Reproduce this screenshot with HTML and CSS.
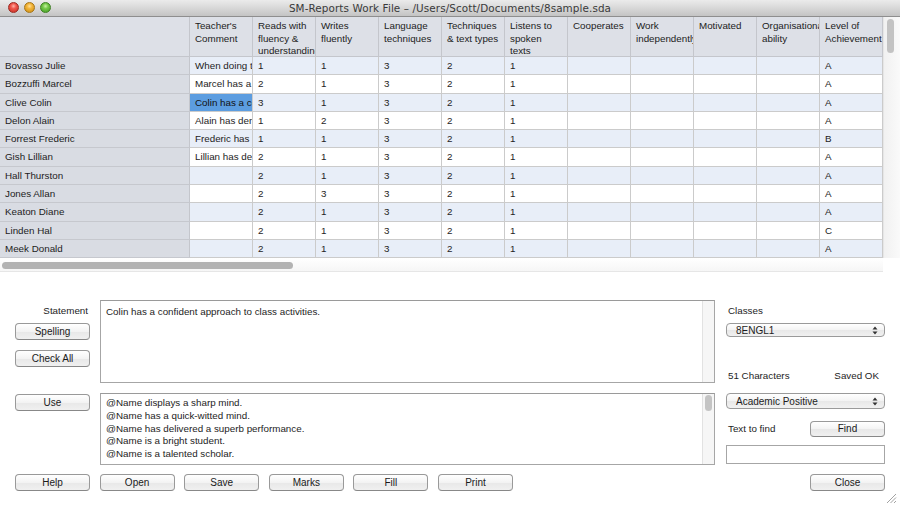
FILE: index.html
```html
<!DOCTYPE html>
<html>
<head>
<meta charset="utf-8">
<title>SM-Reports Work File</title>
<link rel="stylesheet" href="styles.css">
</head>
<body>
<div class="window">
  <div class="titlebar">
    <div class="lights">
      <span class="light red"></span>
      <span class="light yellow"></span>
      <span class="light green"></span>
    </div>
    <div class="title">SM-Reports Work File – /Users/Scott/Documents/8sample.sda</div>
  </div>

  <div class="grid-wrap">
    <div class="table">
      <div class="hd name"></div>
      <div class="hd">Teacher's<br>Comment</div>
      <div class="hd">Reads with<br>fluency &amp;<br>understanding</div>
      <div class="hd">Writes<br>fluently</div>
      <div class="hd">Language<br>techniques</div>
      <div class="hd">Techniques<br>&amp; text types</div>
      <div class="hd">Listens to<br>spoken<br>texts</div>
      <div class="hd">Cooperates</div>
      <div class="hd">Work<br>independently</div>
      <div class="hd">Motivated</div>
      <div class="hd">Organisational<br>ability</div>
      <div class="hd">Level of<br>Achievement</div>

      <div class="c name">Bovasso Julie</div><div class="c alt">When doing this task, Julie</div><div class="c alt">1</div><div class="c alt">1</div><div class="c alt">3</div><div class="c alt">2</div><div class="c alt">1</div><div class="c alt"></div><div class="c alt"></div><div class="c alt"></div><div class="c alt"></div><div class="c alt">A</div>
      <div class="c name">Bozzuffi Marcel</div><div class="c">Marcel has a positive</div><div class="c">2</div><div class="c">1</div><div class="c">3</div><div class="c">2</div><div class="c">1</div><div class="c"></div><div class="c"></div><div class="c"></div><div class="c"></div><div class="c">A</div>
      <div class="c name">Clive Colin</div><div class="c sel">Colin has a confident</div><div class="c alt">3</div><div class="c alt">1</div><div class="c alt">3</div><div class="c alt">2</div><div class="c alt">1</div><div class="c alt"></div><div class="c alt"></div><div class="c alt"></div><div class="c alt"></div><div class="c alt">A</div>
      <div class="c name">Delon Alain</div><div class="c">Alain has demonstrated</div><div class="c">1</div><div class="c">2</div><div class="c">3</div><div class="c">2</div><div class="c">1</div><div class="c"></div><div class="c"></div><div class="c"></div><div class="c"></div><div class="c">A</div>
      <div class="c name">Forrest Frederic</div><div class="c alt">Frederic has consistently</div><div class="c alt">1</div><div class="c alt">1</div><div class="c alt">3</div><div class="c alt">2</div><div class="c alt">1</div><div class="c alt"></div><div class="c alt"></div><div class="c alt"></div><div class="c alt"></div><div class="c alt">B</div>
      <div class="c name">Gish Lillian</div><div class="c">Lillian has demonstrated</div><div class="c">2</div><div class="c">1</div><div class="c">3</div><div class="c">2</div><div class="c">1</div><div class="c"></div><div class="c"></div><div class="c"></div><div class="c"></div><div class="c">A</div>
      <div class="c name">Hall Thurston</div><div class="c alt"></div><div class="c alt">2</div><div class="c alt">1</div><div class="c alt">3</div><div class="c alt">2</div><div class="c alt">1</div><div class="c alt"></div><div class="c alt"></div><div class="c alt"></div><div class="c alt"></div><div class="c alt">A</div>
      <div class="c name">Jones Allan</div><div class="c"></div><div class="c">2</div><div class="c">3</div><div class="c">3</div><div class="c">2</div><div class="c">1</div><div class="c"></div><div class="c"></div><div class="c"></div><div class="c"></div><div class="c">A</div>
      <div class="c name">Keaton Diane</div><div class="c alt"></div><div class="c alt">2</div><div class="c alt">1</div><div class="c alt">3</div><div class="c alt">2</div><div class="c alt">1</div><div class="c alt"></div><div class="c alt"></div><div class="c alt"></div><div class="c alt"></div><div class="c alt">A</div>
      <div class="c name">Linden Hal</div><div class="c"></div><div class="c">2</div><div class="c">1</div><div class="c">3</div><div class="c">2</div><div class="c">1</div><div class="c"></div><div class="c"></div><div class="c"></div><div class="c"></div><div class="c">C</div>
      <div class="c name">Meek Donald</div><div class="c alt"></div><div class="c alt">2</div><div class="c alt">1</div><div class="c alt">3</div><div class="c alt">2</div><div class="c alt">1</div><div class="c alt"></div><div class="c alt"></div><div class="c alt"></div><div class="c alt"></div><div class="c alt">A</div>
    </div>
    <div class="vscroll"><div class="vthumb"></div></div>
  </div>

  <div class="hscroll"><div class="hthumb"></div></div>

  <div class="lower">
    <div class="row row-a">
      <div class="side">
        <div class="label stmt-label">Statement</div>
        <div class="btn spell">Spelling</div>
        <div class="btn check">Check All</div>
      </div>
      <div class="box stmt">
        <div class="box-text">Colin has a confident approach to class activities.</div>
        <div class="track"></div>
      </div>
      <div class="right">
        <div class="label">Classes</div>
        <div class="popup classes-pop"><span>8ENGL1</span><svg class="arrows" width="6" height="9" viewBox="0 0 6 9"><path d="M3 0.5 L5.5 3.5 L0.5 3.5 Z M3 8.5 L5.5 5.5 L0.5 5.5 Z" fill="#333"/></svg></div>
        <div class="chars"><span>51 Characters</span><span>Saved OK</span></div>
      </div>
    </div>

    <div class="row row-b">
      <div class="side">
        <div class="btn use">Use</div>
      </div>
      <div class="box list">
        <div class="box-text lines">
          <div>@Name displays a sharp mind.</div>
          <div>@Name has a quick-witted mind.</div>
          <div>@Name has delivered a superb performance.</div>
          <div>@Name is a bright student.</div>
          <div>@Name is a talented scholar.</div>
        </div>
        <div class="track"><div class="lthumb"></div></div>
      </div>
      <div class="right">
        <div class="popup"><span>Academic Positive</span><svg class="arrows" width="6" height="9" viewBox="0 0 6 9"><path d="M3 0.5 L5.5 3.5 L0.5 3.5 Z M3 8.5 L5.5 5.5 L0.5 5.5 Z" fill="#333"/></svg></div>
        <div class="find-row"><span class="label">Text to find</span><div class="btn find">Find</div></div>
        <div class="field"></div>
      </div>
    </div>

    <div class="row row-c">
      <div class="btn">Help</div>
      <div class="btn">Open</div>
      <div class="btn">Save</div>
      <div class="btn">Marks</div>
      <div class="btn">Fill</div>
      <div class="btn">Print</div>
      <div class="spacer"></div>
      <div class="btn">Close</div>
    </div>
  </div>

  <svg class="grip" width="11" height="11" viewBox="0 0 11 11">
    <path d="M1 10 L10 1 M4.5 10 L10 4.5 M8 10 L10 8" stroke="#8a8a8a" stroke-width="0.8"/>
  </svg>
</div>
</body>
</html>
```
FILE: styles.css
```css
* { box-sizing: border-box; }
html, body { margin: 0; padding: 0; }
body {
  width: 900px;
  height: 506px;
  overflow: hidden;
  background: #ffffff;
  font-family: "Liberation Sans", Arial, sans-serif;
  font-size: 9.8px;
  color: #1d1d1d;
}
.window {
  width: 900px;
  height: 506px;
  display: flex;
  flex-direction: column;
  background: #ffffff;
  position: relative;
}

/* title bar */
.titlebar {
  height: 17px;
  flex: none;
  display: flex;
  align-items: center;
  background: linear-gradient(#ebebeb, #d6d6d6 55%, #c4c4c4);
  border-bottom: 1px solid #8e8e8e;
  position: relative;
}
.lights {
  display: flex;
  gap: 5px;
  padding-left: 8px;
  position: absolute;
  left: 0;
  top: 2px;
}
.light {
  width: 11px;
  height: 11px;
  border-radius: 50%;
  display: block;
}
.red { background: radial-gradient(circle at 50% 35%, #ffb3a8 0, #f0574c 35%, #c22a20 100%); border: 0.5px solid #9c2a22; }
.yellow { background: radial-gradient(circle at 50% 35%, #ffe29a 0, #f3b53a 35%, #c98a12 100%); border: 0.5px solid #a57415; }
.green { background: radial-gradient(circle at 50% 35%, #c9f2a4 0, #76c94a 35%, #3f9a22 100%); border: 0.5px solid #3e7f22; }
.title {
  flex: 1;
  text-align: center;
  font-family: "DejaVu Sans", sans-serif;
  font-size: 10.4px;
  color: #3a3a3a;
  letter-spacing: 0.1px;
}

/* table */
.grid-wrap {
  height: 241px;
  flex: none;
  display: flex;
}
.table {
  width: 883px;
  display: grid;
  grid-template-columns: 190px repeat(11, 63px);
  grid-template-rows: 40px repeat(11, 18.3px);
  overflow: hidden;
}
.hd {
  background: #dde0e7;
  border-right: 1px solid #c4c6cc;
  border-bottom: 1px solid #c4c6cc;
  padding: 3px 5px 0 5px;
  line-height: 12.5px;
  white-space: nowrap;
  overflow: hidden;
  color: #222;
}
.c {
  border-right: 1px solid #cbcbcb;
  border-bottom: 1px solid #cbcbcb;
  padding: 0 5px;
  line-height: 17.3px;
  white-space: nowrap;
  overflow: hidden;
  text-overflow: clip;
  background: #ffffff;
}
.c.alt { background: #e8eef8; }
.c.name { background: #d9dce3; border-bottom-color: #c6c8ce; border-right-color: #c4c6cc; }
.c.sel { background: #5c9de0; color: #111; }

.vscroll {
  width: 17px;
  background: linear-gradient(90deg, #f1f1f1, #fafafa);
  border-left: 1px solid #e6e6e6;
  padding: 2px 0 0 3px;
}
.vthumb {
  width: 7px;
  height: 34px;
  border-radius: 4px;
  background: #c3c3c3;
}
.hscroll {
  height: 14px;
  width: 883px;
  flex: none;
  padding: 4px 0 0 2px;
  background: linear-gradient(#ffffff, #f6f6f6);
  border-bottom: 1px solid #e6e6e6;
}
.hthumb {
  width: 291px;
  height: 7px;
  border-radius: 4px;
  background: #b3b3b3;
}

/* lower area */
.lower {
  flex: 1;
  padding: 28px 0 0 15px;
}
.row { display: flex; }
.row-a { height: 83px; }
.row-b { height: 72px; margin-top: 10px; }
.row-c { height: 17px; margin-top: 9px; gap: 9.6px; width: 870px; }
.side {
  width: 75px;
  margin-right: 10px;
  display: flex;
  flex-direction: column;
}
.label { line-height: 14px; color: #1d1d1d; }
.stmt-label { margin-top: 4px; text-align: right; padding-right: 2px; }
.btn {
  height: 17px;
  width: 75px;
  flex: none;
  border: 1px solid #999999;
  border-bottom-color: #888;
  border-radius: 4px;
  background: linear-gradient(#ffffff, #f3f3f3 50%, #e8e8e8 52%, #f0f0f0);
  text-align: center;
  line-height: 15px;
  font-size: 10px;
  color: #1a1a1a;
}
.spell { margin-top: 5px; }
.check { margin-top: 10px; }
.use { margin-top: 1px; }

.box {
  width: 615px;
  border: 1px solid #a6a6a6;
  border-top-color: #9a9a9a;
  display: flex;
  background: #fff;
}
.box-text {
  flex: 1;
  padding: 4px 5px;
  line-height: 14px;
}
.lines { padding-top: 3px; line-height: 12.8px; }
.track {
  width: 12px;
  background: #f6f6f6;
  border-left: 1px solid #e2e2e2;
  padding: 1px 0 0 2px;
}
.lthumb {
  width: 7px;
  height: 16px;
  border-radius: 4px;
  background: #c4c4c4;
}
.right {
  width: 159px;
  margin-left: 11px;
  display: flex;
  flex-direction: column;
}
.right > .label:first-child { margin-top: 4px; padding-left: 2px; }
.popup {
  height: 16px;
  border: 1px solid #9a9a9a;
  border-radius: 4px;
  background: linear-gradient(#ffffff, #f3f3f3 50%, #e8e8e8 52%, #f1f1f1);
  display: flex;
  align-items: center;
  justify-content: space-between;
  padding: 0 6px 0 9px;
  font-size: 10px;
}
.classes-pop { margin-top: 5px; }
.arrows { display: block; }
.chars {
  margin-top: 32px;
  line-height: 14px;
  display: flex;
  justify-content: space-between;
  padding: 0 6px 0 2px;
}
.find-row {
  margin-top: 12px;
  height: 16px;
  display: flex;
  align-items: center;
  justify-content: space-between;
  padding-left: 2px;
}
.find { height: 16px; line-height: 14px; }
.field {
  margin-top: 8px;
  height: 19px;
  border: 1px solid #a6a6a6;
  background: #fff;
}
.spacer { flex: 1; }

.grip {
  position: absolute;
  right: 3px;
  bottom: 2px;
}
```
